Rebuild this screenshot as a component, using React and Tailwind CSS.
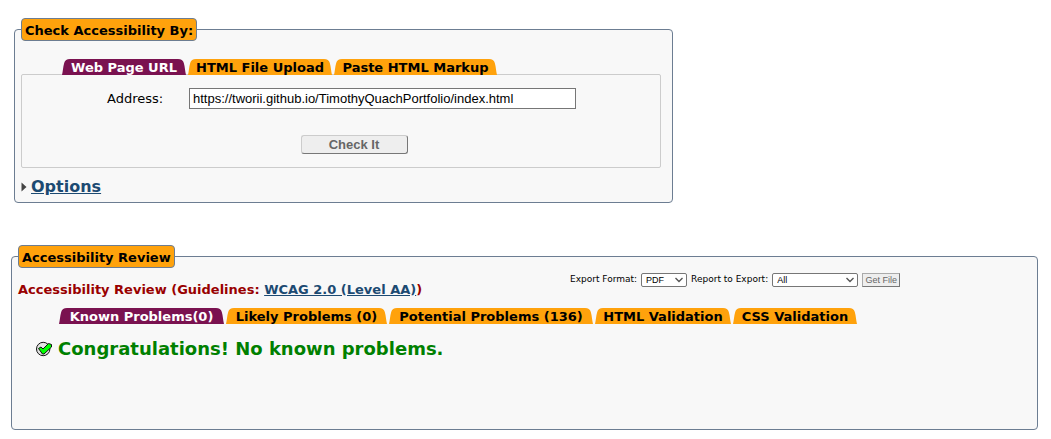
import { useState } from "react";

const panel = "rounded border border-[#6c7d92] bg-[#f8f8f8] px-1.5";
const legend =
  "flex h-[23px] items-center rounded border border-[#6c7d92] bg-[#ffa20c] px-[3px] pt-0.5 font-bold text-black";

function Tab({ label, selected, onSelect, width }) {
  const fill = selected ? "fill-[#7a1250]" : "fill-[#ffa20c]";
  const body = selected ? "bg-[#7a1250] text-white" : "bg-[#ffa20c] text-black";
  return (
    <button
      type="button"
      role="tab"
      aria-selected={selected}
      onClick={onSelect}
      className={`flex h-4 shrink-0 items-stretch font-bold leading-[18px] whitespace-nowrap ${width}`}
    >
      <svg className={`h-4 w-2 shrink-0 ${fill}`} viewBox="0 0 8 16" aria-hidden="true">
        <path d="M0 16 C1 12 1 8 2.2 4 Q3.2 0 8 0 V16 Z" />
      </svg>
      <span className={`flex flex-1 justify-center ${body}`}>{label}</span>
      <svg className={`h-4 w-2 shrink-0 ${fill}`} viewBox="0 0 8 16" aria-hidden="true">
        <path d="M8 16 C7 12 7 8 5.8 4 Q4.8 0 0 0 V16 Z" />
      </svg>
    </button>
  );
}

function TabList({ tabs, label, className }) {
  const [active, setActive] = useState(0);
  return (
    <div role="tablist" aria-label={label} className={`flex gap-0.5 pl-[41px] ${className}`}>
      {tabs.map((tab, i) => (
        <Tab key={tab.label} {...tab} selected={i === active} onSelect={() => setActive(i)} />
      ))}
    </div>
  );
}

function Select({ id, options, width }) {
  return (
    <span className={`grid h-[14px] items-center ${width}`}>
      <select
        id={id}
        className="col-start-1 row-start-1 h-[14px] w-full appearance-none rounded-xs border border-[#767676] bg-white pl-1 font-['Liberation_Sans',sans-serif] text-[9px] leading-3 text-black"
      >
        {options.map((option) => (
          <option key={option}>{option}</option>
        ))}
      </select>
      <svg
        className="pointer-events-none col-start-1 row-start-1 mr-1 h-1.5 w-2 justify-self-end fill-none stroke-[#555]"
        viewBox="0 0 8 6"
        aria-hidden="true"
      >
        <path d="M0.5 1 L4 4.5 L7.5 1" strokeWidth="1.4" />
      </svg>
    </span>
  );
}

const inputTabs = [
  { label: "Web Page URL", width: "w-[124px]" },
  { label: "HTML File Upload", width: "w-[144px]" },
  { label: "Paste HTML Markup", width: "w-[163px]" },
];

const resultTabs = [
  { label: "Known Problems(0)", width: "w-[165px]" },
  { label: "Likely Problems (0)", width: "w-[161px]" },
  { label: "Potential Problems (136)", width: "w-[204px]" },
  { label: "HTML Validation", width: "w-[136px]" },
  { label: "CSS Validation", width: "w-[124px]" },
];

export default function App() {
  return (
    <main className="bg-white pt-[18px] pr-[13px] pb-2 pl-[11px] font-[Verdana,'DejaVu_Sans',sans-serif] text-[13px] leading-4 text-black">
      <form onSubmit={(e) => e.preventDefault()} className="ml-[3px] max-w-[659px]">
        <fieldset className={panel}>
          <legend className={legend}>Check Accessibility By:</legend>
          <TabList tabs={inputTabs} label="Input method" className="relative z-10 -mb-px pt-[18px]" />
          <div className="mr-[5px] rounded-xs border border-[#cccccc] py-[13px]">
            <div className="flex items-center">
              <label htmlFor="address" className="w-[167px] pl-[85px]">
                Address:
              </label>
              <input
                id="address"
                type="text"
                defaultValue="https://tworii.github.io/TimothyQuachPortfolio/index.html"
                className="h-[21px] w-[387px] border border-[#767676] bg-white px-[3px] font-['Liberation_Sans',sans-serif] text-[13px]"
              />
            </div>
            <div className="mt-[26px] flex justify-center pl-[26px]">
              <button
                type="submit"
                className="h-[19px] w-[107px] rounded-[3px] border border-t-[#cccccc] border-r-[#777777] border-b-[#777777] border-l-[#cccccc] bg-[#eeeeee] font-['Liberation_Sans',sans-serif] font-bold leading-4 text-[#666666]"
              >
                Check It
              </button>
            </div>
          </div>
          <div className="flex items-center gap-1 pt-[9px] pb-[5px] text-base leading-5">
            <svg className="h-[10px] w-1.5 fill-[#444444]" viewBox="0 0 6 10" aria-hidden="true">
              <path d="M0.5 0.5 L5.5 5 L0.5 9.5 Z" />
            </svg>
            <a href="#options" className="font-bold text-[#1c4a72] underline">
              Options
            </a>
          </div>
        </fieldset>
      </form>

      <fieldset className={`${panel} mt-[42px] min-h-[185px]`}>
        <legend className={legend}>Accessibility Review</legend>
        <div className="flex items-start pt-[5px]">
          <h1 className="w-[552px] shrink-0 pt-[9px] font-bold text-[#990000]">
            Accessibility Review (Guidelines:{" "}
            <a href="#wcag" className="text-[#1c4a72] underline">
              WCAG 2.0 (Level AA)
            </a>
            )
          </h1>
          <div className="flex items-center gap-1 text-[9px] leading-3 whitespace-nowrap">
            <label htmlFor="format" className="pb-0.5">Export Format:</label>
            <Select id="format" options={["PDF", "CSV", "HTML"]} width="w-[46px]" />
            <label htmlFor="report" className="pb-0.5">Report to Export:</label>
            <Select id="report" options={["All", "Known", "Likely", "Potential"]} width="w-[86px]" />
            <button
              type="button"
              className="h-[14px] w-[38px] border border-t-[#aaaaaa] border-r-[#777777] border-b-[#777777] border-l-[#aaaaaa] bg-[#eeeeee] font-['Liberation_Sans',sans-serif] leading-3 text-[#666666]"
            >
              Get File
            </button>
          </div>
        </div>
        <TabList tabs={resultTabs} label="Results" className="pt-[10px]" />
        <h2 className="flex items-center gap-1.5 pt-[13px] pl-[18px] text-lg leading-6 font-bold text-[#008000]">
          <svg className="size-4" viewBox="0 0 16 16" aria-hidden="true">
            <circle cx="7.2" cy="8" r="6.7" fill="#e4e4e4" stroke="#111111" />
            <path
              d="M2.5 7.5 L5 6 L7 8 L12.5 2.5 L15.5 3.5 V6 L8 13 H6.5 Z"
              fill="#00ff00"
              stroke="#111111"
              strokeWidth="1"
            />
          </svg>
          Congratulations! No known problems.
        </h2>
      </fieldset>
    </main>
  );
}
